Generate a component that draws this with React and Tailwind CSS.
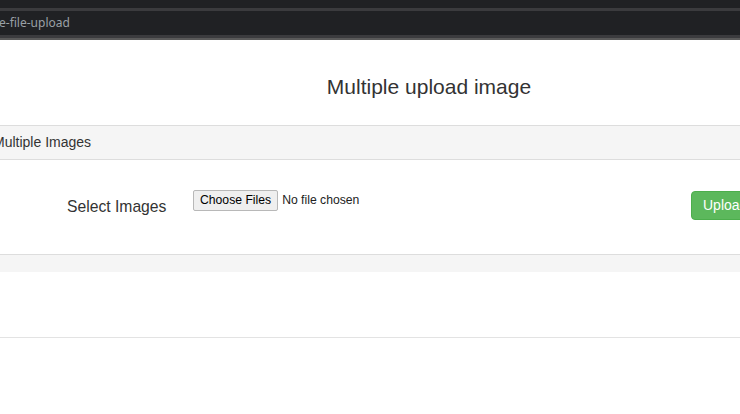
export default function App() {
  return (
    <div className="w-[740px] h-[414px] overflow-hidden bg-white font-['Liberation_Sans',Arial,sans-serif] text-[#333]">
      {/* browser tab strip */}
      <div className="h-[8px] bg-[#202124]" />
      <div className="h-[3px] bg-[#3b3b3e]" />
      <div className="h-[24px] bg-[#202124] flex items-center text-[12px] text-[#9aa0a6] font-['Noto_Sans',sans-serif]">
        <span className="ml-[-1px]">e-file-upload</span>
      </div>
      <div className="h-[3px] bg-[#3b3b3e]" />
      <div className="h-[2px] bg-[#5a5a5a]" />

      <div className="w-[858px]">
        <h1 className="mt-[35px] mb-[26px] text-center text-[21px] leading-[24px] font-normal">
          Multiple upload image
        </h1>

        <div className="border-t border-[#dddddd] bg-[#f5f5f5] h-[34px] flex items-center text-[14px]">
          <span className="ml-[-7px]">Multiple Images</span>
        </div>

        <div className="border-t border-[#dddddd] h-[95px] pt-[30px] flex items-start">
          <label className="ml-[67px] w-[126px] mt-[7px] text-[15.7px] leading-[20px]">Select Images</label>
          <div className="w-[498px] flex items-center text-[12.2px] h-[21px]">
            <span className="h-[21px] px-[6px] flex items-center border border-[#b8b8b8] bg-[#efefef] rounded-[2px] text-black">
              Choose Files
            </span>
            <span className="ml-[4px] text-[#222]">No file chosen</span>
          </div>
          <button className="mt-[1px] h-[29px] px-[11px] rounded-[4px] bg-[#5cb85c] border border-[#4cae4c] text-white text-[14px]">
            Upload
          </button>
        </div>

        <div className="border-t border-[#dddddd] bg-[#f5f5f5] h-[18px]" />
        <div className="h-[65px]" />
        <div className="border-t border-[#e3e3e3]" />
      </div>
    </div>
  );
}
